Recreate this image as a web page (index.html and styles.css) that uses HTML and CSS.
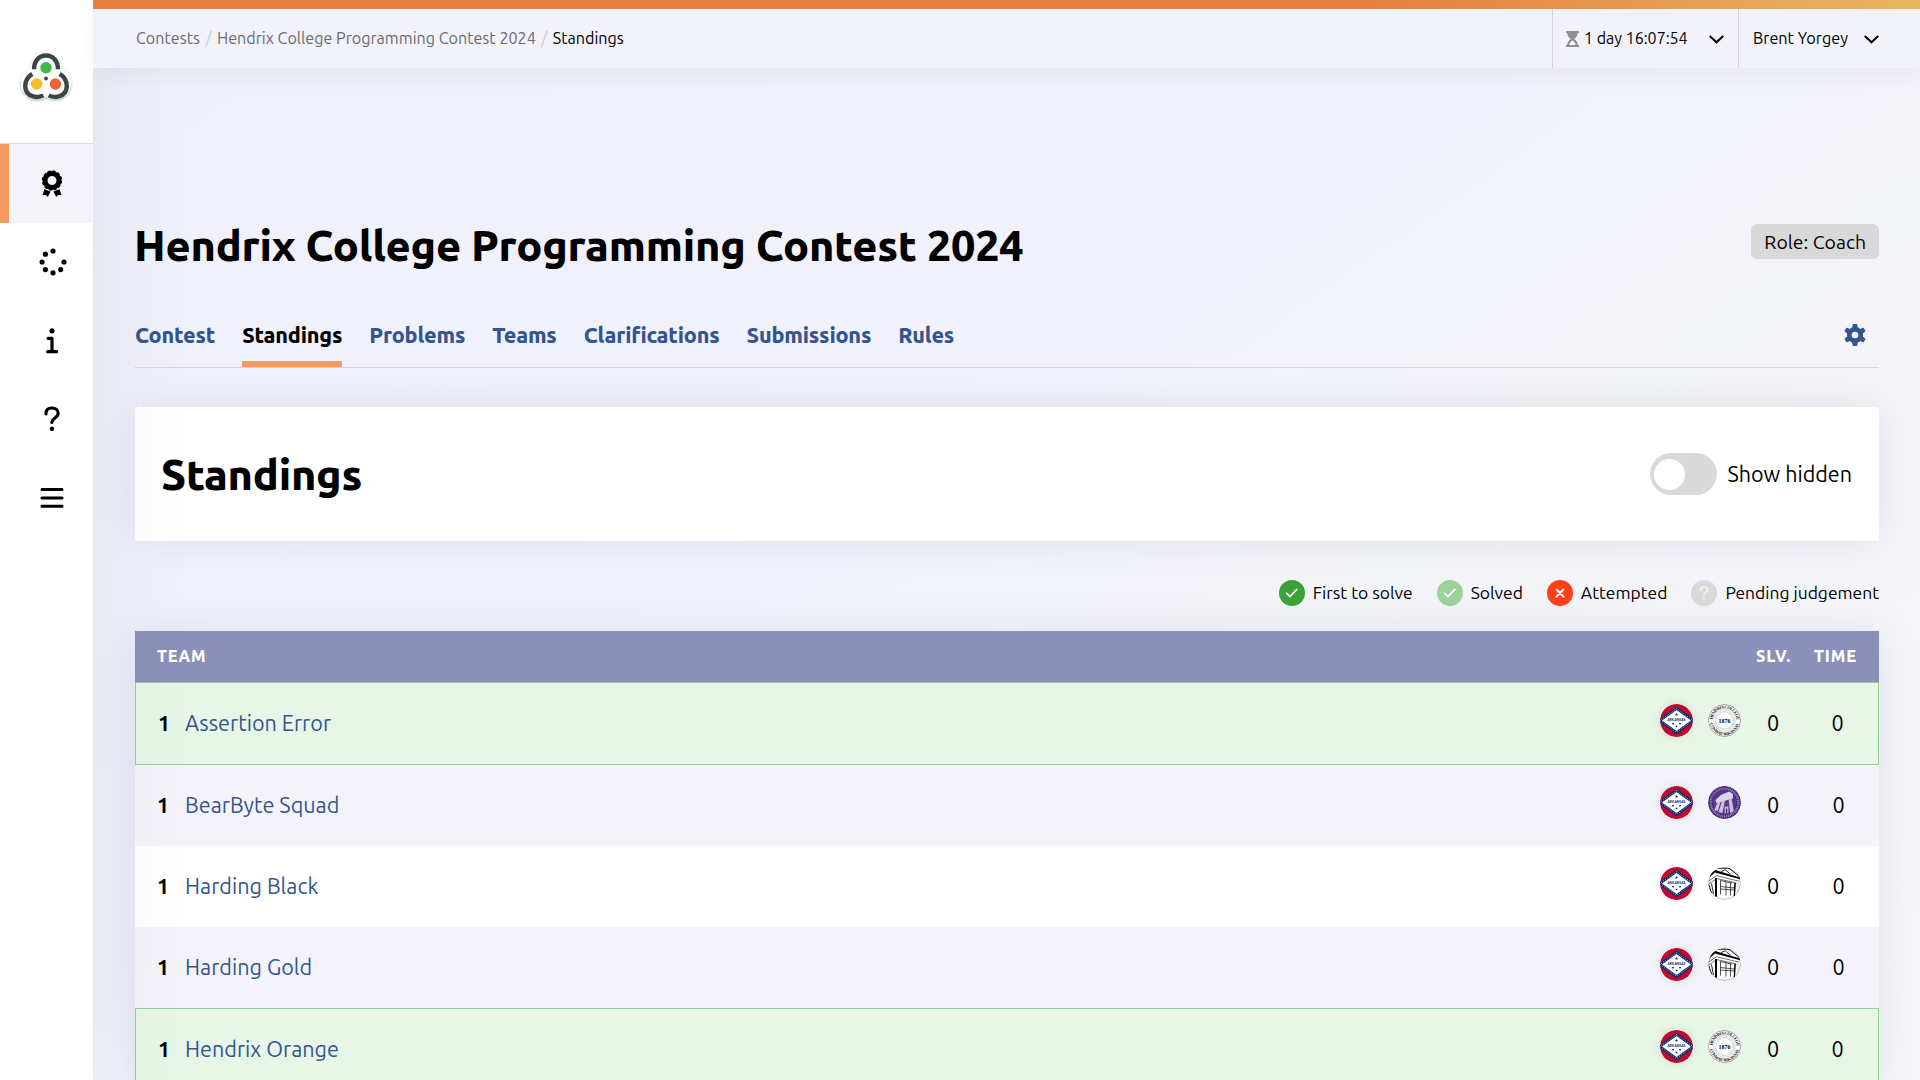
FILE: index.html
```html
<!DOCTYPE html>
<html lang="en">
<head>
<meta charset="utf-8">
<title>Standings</title>
<link rel="stylesheet" href="styles.css">
</head>
<body>
<svg class="defs" width="0" height="0">
  <defs>
    <symbol id="flag" viewBox="0 0 33 33">
      <clipPath id="flag-round"><circle cx="16.500" cy="16.500" r="16.500"/></clipPath>
      <g clip-path="url(#flag-round)">
        <path d="M0 0h33v33H0z" fill="#c2082f"/>
        <path d="M16.500 2.800 35.500 16.500 16.500 30.200-2.500 16.500Z" fill="#0b2a6b"/>
        <path d="M16.500 4.600 33 16.500 16.500 28.400 0 16.500Z" fill="none" stroke="#dfe4f0" stroke-width=".9" stroke-dasharray=".9 1.700"/>
        <path d="M16.500 6.100 31 16.500 16.500 26.900 2 16.500Z" fill="#fff"/>
      </g>
      <text x="16.500" y="17.200" text-anchor="middle" font-size="3.300" font-weight="700" textLength="18" lengthAdjust="spacingAndGlyphs" fill="#0b2a6b">ARKANSAS</text>
      <path d="m16.500 9 .5.900h.9l-.6.8.2 1-1-.4-1 .4.200-1-.6-.8h.9zM12 19h2l-.4 1.600h-1.200zM19 19h2l-.4 1.600h-1.200zM15.500 21.700h2l-.4 1.600h-1.200z" fill="#0b2a6b"/>
    </symbol>
    <symbol id="hendrix" viewBox="0 0 33 33">
      <circle cx="16.500" cy="16.500" r="16.100" fill="#fff" stroke="#777" stroke-width=".7"/>
      <circle cx="16.500" cy="16.500" r="10.800" fill="none" stroke="#aaa" stroke-width=".5"/>
      <circle cx="16.500" cy="16.500" r="8.800" fill="none" stroke="#bbb" stroke-width="1.600" stroke-dasharray=".6 .6"/>
      <path id="arc-top" d="M4.500 16.500a12 12 0 0 1 24 0" fill="none"/>
      <path id="arc-bottom" d="M1.600 16.500a14.900 14.900 0 0 0 29.800 0" fill="none"/>
      <text class="seal-text" fill="#111" font-size="4.400"><textPath href="#arc-top" startOffset="1" textLength="36">HENDRIX COLLEGE</textPath></text>
      <text class="seal-text" fill="#111" font-size="4.400"><textPath href="#arc-bottom" startOffset="3" textLength="40">CONWAY ARKANSAS</textPath></text>
      <text class="seal-text" x="16.500" y="18.600" text-anchor="middle" font-size="6" fill="#000">1876</text>
    </symbol>
    <symbol id="uca" viewBox="0 0 33 33">
      <circle cx="16.500" cy="16.500" r="16.500" fill="#4f2d7f"/>
      <circle cx="16.500" cy="16.500" r="13.800" fill="none" stroke="#9c86bb" stroke-width="2.200" stroke-dasharray="1 .9"/>
      <circle cx="16.500" cy="16.500" r="11.400" fill="#5b398c"/>
      <path d="M7.500 14 13 9l8.500-3.400 3.500 2.700-.2 4.200L11 16.500l-2.700.500Z" fill="#ddd4e9"/>
      <path d="m9.500 16.500 3-.8-2.600 9-3.700-.4zM13.800 15.500l3.200-.9-2.600 12.300-3.900-.6zM20.600 13.500l3-.7 2.200 12.200-3.600 2.500z" fill="#cbbfdc"/>
      <path d="M16.600 20.500h3.800v6.800h-3.800z" fill="#bfb0d5"/><path d="M18 22.800h1.100v4.500H18z" fill="#3d1f6c"/>
    </symbol>
    <symbol id="harding" viewBox="0 0 33 33">
      <clipPath id="round"><circle cx="16.500" cy="16.500" r="16.500"/></clipPath>
      <g clip-path="url(#round)">
        <circle cx="16.500" cy="16.500" r="16" fill="#fff" stroke="#888" stroke-width=".6"/>
        <path d="M8 1.200h13l11.500 9.300" fill="none" stroke="#111" stroke-width="1"/>
        <path d="M8 1.400 0 9" stroke="#111" stroke-width="1.300"/>
        <path d="M7 3 33 10.800V12.600L7 5.400 0 11.500V9.300Z" fill="#000"/>
        <path d="m13 4.600 4.300-1.800 5 4.300" fill="none" stroke="#111" stroke-width=".9"/>
        <path d="M0 14.500 8.500 8.700 31 14.200M0 17.500l8.500-6L28.500 16" fill="none" stroke="#333" stroke-width=".7"/>
        <path d="M7 11h2v19l-2-1zM26.300 16h1.600l-.9 13h-1.300z" fill="#000"/>
        <path d="m1 18 2.500 8M3.500 16.500 5.500 27" stroke="#111" stroke-width=".9"/>
        <path d="M12.500 13.500v14M18 15v13.500M22.500 15.500v13M12.500 13.500l12 2.700M12.500 19.500l13.500 1.500M12.500 22l13.500 1" fill="none" stroke="#222" stroke-width=".8"/>
        <path d="M30 15v10" stroke="#bbb" stroke-width=".6"/>
      </g>
    </symbol>
    <symbol id="check" viewBox="0 0 26 26"><path d="m7.700 13.400 3.200 3.300 7-7.300" fill="none" stroke="#fff" stroke-width="1.700" stroke-linecap="round" stroke-linejoin="round"/></symbol>
    <symbol id="chevron" viewBox="0 0 15 9"><path d="m.8 1 6.700 6.300L14.200 1" fill="none" stroke="#000" stroke-width="2"/></symbol>
  </defs>
</svg>

<div class="layout">
  <aside class="sidebar">
    <a class="brand">
      <svg width="58" height="54" viewBox="0 0 58 54">
        <g class="brand-halo" stroke="#fff" stroke-width="13" fill="#fff" stroke-linecap="round">
          <circle cx="29" cy="17" r="9"/><circle cx="20" cy="32" r="10"/><circle cx="38" cy="32" r="10"/>
        </g>
        <g fill="none" stroke="#3c4648" stroke-width="4.400">
          <path d="M17.100 18.200C16.900 10.500 21.500 4.500 29 4.500s12.100 6 11.900 13.700"/>
          <path d="M15.300 22.800C5.500 29 6 42.500 16 45.400c4 1.100 7.300.6 10.400-1"/>
          <path d="M42.700 22.800C52.500 29 52 42.500 42 45.400c-4 1.100-7.300.6-10.400-1"/>
        </g>
        <circle cx="29" cy="16.800" r="5.700" fill="#40b84a"/><circle cx="19.700" cy="33" r="5.700" fill="#f6bd2a"/><circle cx="38.400" cy="33" r="5.700" fill="#ec6338"/><circle cx="29" cy="27.500" r="1.900" fill="#3c4648"/>
      </svg>
    </a>
    <nav class="side-nav">
      <a class="side-item active"><svg width="22" height="28" viewBox="0 0 22 28"><circle cx="11" cy="10.500" r="7" fill="none" stroke="#000" stroke-width="5"/><circle cx="11" cy="10.500" r="9.500" fill="none" stroke="#000" stroke-width="1.300" stroke-dasharray="3 2"/><path d="m3.500 19.200 6 2.200L6.800 27l-1.700-2-3.600.1zM18.500 19.200l-6 2.200 2.700 5.600 1.700-2 3.600.1z"/></svg></a>
      <a class="side-item spinner"><svg width="28" height="28" viewBox="0 0 28 28"><circle cx="14" cy="3" r="2.600"/><circle cx="6.400" cy="6.200" r="2.600"/><circle cx="3.100" cy="14" r="2.600"/><circle cx="6.400" cy="21.600" r="2.600"/><circle cx="14" cy="24.800" r="2.600"/><circle cx="21.700" cy="21.600" r="2.600"/><circle cx="25" cy="14" r="2.600"/></svg></a>
      <a class="side-item info"><svg width="12" height="26" viewBox="0 0 12 26"><circle cx="6" cy="2.800" r="2.600"/><path d="M2 10.300h4v13.400M1.700 23.700h8.800" fill="none" stroke="#000" stroke-width="3.200" stroke-linecap="round" stroke-linejoin="round"/></svg></a>
      <a class="side-item"><svg width="16" height="26" viewBox="0 0 16 26"><path d="M2 8C1.800 3.800 4 2 7.800 2c4 0 6.400 1.900 6.400 5.300 0 4.500-6.300 4.800-6.300 9.200" fill="none" stroke="#000" stroke-width="3.100" stroke-linecap="round"/><circle cx="7.900" cy="22.800" r="2.200"/></svg></a>
      <a class="side-item"><svg width="24" height="22" viewBox="0 0 24 22"><path d="M2 2.400h20M2 11h20M2 19.300h20" stroke="#000" stroke-width="3" stroke-linecap="round"/></svg></a>
    </nav>
  </aside>

  <div class="page">
    <header class="topbar">
      <nav class="crumbs"><span>Contests</span><i>/</i><span>Hendrix College Programming Contest 2024</span><i>/</i><b>Standings</b></nav>
      <div class="clock">
        <svg width="13" height="16" viewBox="0 0 13 16"><path d="M0 0h13v2h-1.300c0 3-1.600 4.600-3.500 6 1.900 1.400 3.500 3 3.500 6H13v2H0v-2h1.300c0-3 1.600-4.600 3.500-6C2.900 6.600 1.300 5 1.300 2H0Zm6.500 9.500C4.500 10.800 3.500 12 3.300 14h6.400c-.2-2-1.200-3.200-3.200-4.500Z" fill="#8f8f8f"/></svg>
        <span class="clock-text">1 day 16:07:54</span>
        <svg class="chev" width="15" height="9"><use href="#chevron"/></svg>
      </div>
      <div class="account"><span class="account-text">Brent Yorgey</span><svg class="chev" width="15" height="9"><use href="#chevron"/></svg></div>
    </header>

    <main class="content">
      <div class="title-row"><h1>Hendrix College Programming Contest 2024</h1><span class="role">Role: Coach</span></div>
      <nav class="tabs">
        <a>Contest</a><a class="current">Standings</a><a>Problems</a><a>Teams</a><a>Clarifications</a><a>Submissions</a><a>Rules</a>
        <svg class="gear" width="22" height="22" viewBox="0 0 22 22"><circle cx="11" cy="11" r="5.700" fill="none" stroke="#34558f" stroke-width="4.800"/><path d="M8.800 3.800 9.200.3h3.600l.4 3.500zM8.800 18.200l.4 3.500h3.600l.4-3.500zM3.700 9.300.9 7.200l1.800-3.100L5.900 5.500zM18.300 9.300l2.800-2.100-1.800-3.100-3.200 1.400zM3.700 12.700.9 14.800l1.800 3.100 3.200-1.400zM18.300 12.700l2.800 2.100-1.800 3.100-3.200-1.400z" fill="#34558f" stroke="#34558f" stroke-linejoin="round"/></svg>
      </nav>

      <section class="card"><h2>Standings</h2><label class="toggle"><span class="switch"></span><span>Show hidden</span></label></section>

      <ul class="legend">
        <li><svg class="dot first"><use href="#check"/></svg><span>First to solve</span></li>
        <li><svg class="dot solved"><use href="#check"/></svg><span>Solved</span></li>
        <li><svg class="dot attempted" viewBox="0 0 26 26"><path d="m9.500 9.500 7 7m0-7-7 7" stroke="#fff" stroke-width="1.900" stroke-linecap="round"/></svg><span>Attempted</span></li>
        <li><svg class="dot pending" viewBox="0 0 26 26"><path d="M9.700 10.300c-.1-2.400 1.200-3.300 3.300-3.300s3.500 1 3.500 2.900c0 2.500-3.500 2.700-3.500 5.300" fill="none" stroke="#f3f3f6" stroke-width="1.700" stroke-linecap="round"/><circle cx="13" cy="18.600" r="1.200" fill="#f3f3f6"/></svg><span>Pending judgement</span></li>
      </ul>

      <section class="standings">
        <div class="row head"><span class="team-head">Team</span><span class="slv">Slv.</span><span class="time">Time</span></div>
        <div class="row own"><b>1</b><a>Assertion Error</a><svg class="logo flag"><use href="#flag"/></svg><svg class="logo"><use href="#hendrix"/></svg><span class="slv">0</span><span class="time">0</span></div>
        <div class="row tint"><b>1</b><a>BearByte Squad</a><svg class="logo flag"><use href="#flag"/></svg><svg class="logo"><use href="#uca"/></svg><span class="slv">0</span><span class="time">0</span></div>
        <div class="row"><b>1</b><a>Harding Black</a><svg class="logo flag"><use href="#flag"/></svg><svg class="logo"><use href="#harding"/></svg><span class="slv">0</span><span class="time">0</span></div>
        <div class="row tint"><b>1</b><a>Harding Gold</a><svg class="logo flag"><use href="#flag"/></svg><svg class="logo"><use href="#harding"/></svg><span class="slv">0</span><span class="time">0</span></div>
        <div class="row own"><b>1</b><a>Hendrix Orange</a><svg class="logo flag"><use href="#flag"/></svg><svg class="logo"><use href="#hendrix"/></svg><span class="slv">0</span><span class="time">0</span></div>
      </section>
    </main>
  </div>
</div>
</body>
</html>
```
FILE: styles.css
```css
* { box-sizing: border-box; }
body { margin: 0; height: 1080px; overflow: hidden; font-family: Ubuntu, "Noto Sans", sans-serif; color: #000; background: linear-gradient(145deg, #f0f0fa 0%, #f2f2fc 48%, #f3f4f8 62%, #f4f4fa 75%, #f5f6f7 100%); }
.defs { position: absolute; }
.seal-text { font-family: "Liberation Serif", serif; font-weight: 700; }
.layout { display: flex; height: 1080px; }
.sidebar { position: relative; z-index: 2; flex: 0 0 93px; background: #fff; box-shadow: 0 0 110px rgba(20, 20, 60, .08); pointer-events: none; }
.brand { display: flex; justify-content: center; height: 144px; padding-top: 51px; border-bottom: 1px solid #d9d9d9; }
.brand svg { margin-right: 1px; overflow: visible; }
.brand-halo { filter: drop-shadow(0 1px 1px rgba(0, 0, 0, .3)); }
.side-item { display: flex; align-items: center; justify-content: center; height: 78.700px; padding-left: 10px; }
.side-item.active { background: #f3f3f9; border-left: 9px solid #f7985f; padding-left: 1px; }
.side-item.active, .side-item.info { padding-top: 1px; }
.spinner { padding-left: 13px; }
.page { flex: 1; min-width: 0; }
.topbar { position: relative; z-index: 3; display: flex; height: 68px; padding-left: 43px; border-top: 9px solid; border-image: linear-gradient(90deg, #e58044 0%, #e58044 70%, #e8b761 100%) 9; background: #f2f2fb; box-shadow: 0 10px 20px rgba(20, 20, 40, .04); font-size: 16.200px; }
.crumbs { display: flex; flex: 1; align-items: center; padding-bottom: 2px; font-size: 16.120px; color: #6b6b6b; }
.crumbs i { width: 17px; text-align: center; color: #ccc; font-style: normal; }
.crumbs b { font-weight: 400; color: #000; }
.clock, .account { display: flex; align-items: center; border-left: 1px solid #d6d6da; }
.clock { width: 186px; padding-left: 13px; }
.clock-text { width: 125px; margin-left: 5px; padding-bottom: 2px; font-size: 16px; white-space: nowrap; }
.account { width: 182px; padding-left: 14px; }
.account-text { width: 111px; padding-bottom: 2px; white-space: nowrap; }
.chev { margin-top: 2px; }
.content { padding: 156px 41px 0 42px; }
.title-row { display: flex; justify-content: space-between; height: 84px; }
h1, h2 { margin: 0 0 0 -1px; font-size: 43.200px; line-height: 42px; font-weight: 800; letter-spacing: -.24px; white-space: nowrap; }
.role { height: 35px; padding: 0 13px; border-radius: 6px; background: #d9d9d9; font-size: 19.400px; line-height: 36px; }
.tabs { display: flex; gap: 27px; height: 60px; border-bottom: 1px solid #d6d6da; font-size: 21.600px; font-weight: 800; letter-spacing: -.18px; line-height: 54px; color: #34558f; }
.tabs .current { border-bottom: 6px solid #f7985f; color: #000; }
.gear { margin: 16px 13px 0 auto; }
.card { display: flex; align-items: center; justify-content: space-between; height: 134px; margin-top: 39px; padding: 0 27px; border-radius: 4px; background: #fff; box-shadow: 0 0 40px rgba(20, 20, 60, .08); }
.toggle { display: flex; align-items: center; gap: 10px; font-size: 21.500px; }
.switch { width: 67px; height: 42px; padding: 5.500px 4px; border-radius: 21px; background: #d9d9d9; }
.switch::before { content: ""; display: block; width: 31px; height: 31px; border-radius: 50%; background: #fff; }
.legend { display: flex; justify-content: flex-end; gap: 24px; height: 90px; margin: 0; padding: 39px 0 0; list-style: none; font-size: 17.450px; }
.legend li { display: flex; align-items: center; gap: 8px; height: 26px; }
.legend span { padding-bottom: 2px; }
.dot { width: 26px; height: 26px; border-radius: 50%; }
.first { background: #38a138; }
.solved { background: #9ad29a; }
.attempted { background: #ff4019; }
.pending { background: #d9d9d9; }
.standings { box-shadow: 0 0 40px rgba(20, 20, 60, .08); }
.row { display: flex; align-items: center; height: 81px; padding: 0 0 2px 22px; background: #fff; font-size: 21.600px; }
.row b { width: 28px; }
.row a { flex: 1; color: #34558f; }
.row.tint { background: #f3f3f9; }
.row.own { height: 83px; border: 1px solid #93cf93; background: #e7f6e7; }
.row.own b { width: 27px; }
.logo { width: 33px; height: 33px; margin: 0 15px 4px 0; border-radius: 50%; }
.flag { box-shadow: 0 0 10px rgba(0, 0, 0, .1); }
.slv { width: 34px; text-align: center; }
.time { width: 89px; padding-left: 8px; text-align: center; }
.row.own .time { width: 88px; padding-left: 7px; }
.row.head { height: 51px; background: #8b90b8; color: #fff; font-size: 16.200px; font-weight: 800; text-transform: uppercase; letter-spacing: .9px; }
.row.head .time { padding-left: 2px; }
.team-head { flex: 1; }
```
